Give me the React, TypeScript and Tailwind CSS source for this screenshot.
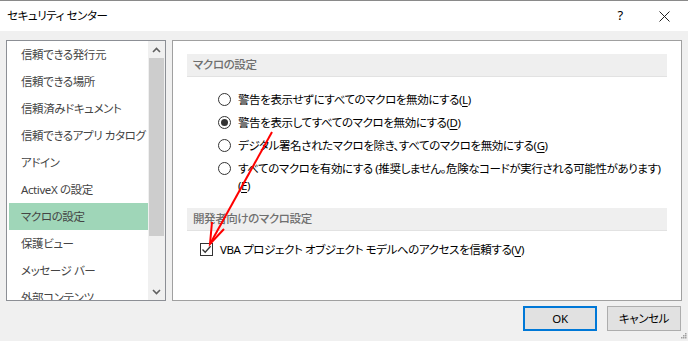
import React from "react";

const listItems = [
  "信頼できる発行元",
  "信頼できる場所",
  "信頼済みドキュメント",
  "信頼できるアプリ カタログ",
  "アドイン",
  "ActiveX の設定",
  "マクロの設定",
  "保護ビュー",
  "メッセージ バー",
  "外部コンテンツ",
];

function Radio({ checked }: { checked?: boolean }) {
  return (
    <span className="flex h-[13px] w-[13px] shrink-0 items-center justify-center rounded-full border border-[#333] bg-white">
      {checked && <span className="h-[7px] w-[7px] rounded-full bg-[#333]" />}
    </span>
  );
}

function Key({ k }: { k: string }) {
  return (
    <>
      (<span className="underline underline-offset-2">{k}</span>)
    </>
  );
}

function Chevron({ up }: { up?: boolean }) {
  return (
    <svg width="9" height="6" viewBox="0 0 9 6">
      <path
        d={up ? "M1 5 L4.5 1.5 L8 5" : "M1 1 L4.5 4.5 L8 1"}
        fill="none"
        stroke="#606060"
        strokeWidth="1.6"
      />
    </svg>
  );
}

export default function App() {
  return (
    <div className="relative flex h-[341px] w-[688px] flex-col overflow-hidden whitespace-nowrap border-t border-[#8a8a8a] bg-[#f0f0f0] font-['Noto_Sans','Noto_Sans_CJK_JP',sans-serif] text-[11.5px] tracking-[-0.4px] text-[#1a1a1a] [font-feature-settings:'palt']">
      {/* title bar */}
      <div className="flex h-[30px] shrink-0 items-center bg-white pl-[7px] pr-[18px]">
        <span className="text-[11.5px] text-black">セキュリティ センター</span>
        <span className="ml-auto w-[10px] text-center text-[13px] text-black">?</span>
        <svg className="ml-[34px]" width="11" height="11" viewBox="0 0 11 11">
          <path d="M0.5 0.5 L10.5 10.5 M10.5 0.5 L0.5 10.5" stroke="#222" strokeWidth="1" />
        </svg>
      </div>

      {/* content */}
      <div className="flex gap-[6px] pl-[6px] pt-[9px]">
        {/* category list */}
        <div className="flex h-[261px] w-[160px] border border-[#8c8f95] bg-white">
          <div className="flex-1 overflow-hidden pl-[2px]">
            {listItems.map((t) => (
              <div
                key={t}
                className={`flex h-[27px] items-center pl-[12px] text-[#444] ${
                  t === "マクロの設定" ? "bg-[#9fd6b8]" : ""
                }`}
              >
                {t}
              </div>
            ))}
          </div>
          <div className="flex w-[17px] flex-col bg-[#f0f0f0]">
            <div className="flex h-[17px] items-center justify-center">
              <Chevron up />
            </div>
            <div className="mx-[1px] h-[178px] bg-[#cdcdcd]" />
            <div className="flex-1" />
            <div className="flex h-[17px] items-center justify-center">
              <Chevron />
            </div>
          </div>
        </div>

        {/* settings panel */}
        <div className="h-[261px] w-[510px] border border-[#a0a0a0] bg-white">
          <div className="ml-[14px] mr-[14px] mt-[13px] flex h-[23px] items-center border-b border-[#e2e2e2] bg-[#efefef] pl-[6px] font-medium text-[#707070]">
            マクロの設定
          </div>
          <div className="mt-[11px] pl-[45px] text-black">
            <div className="flex h-[23px] items-center gap-[7px]">
              <Radio />
              <span>
                警告を表示せずにすべてのマクロを無効にする<Key k="L" />
              </span>
            </div>
            <div className="flex h-[23px] items-center gap-[7px]">
              <Radio checked />
              <span>
                警告を表示してすべてのマクロを無効にする<Key k="D" />
              </span>
            </div>
            <div className="flex h-[23px] items-center gap-[7px]">
              <Radio />
              <span>
                デジタル署名されたマクロを除き、すべてのマクロを無効にする<Key k="G" />
              </span>
            </div>
            <div className="flex items-start gap-[7px] py-[3px] leading-[17px]">
              <span className="mt-[2px]">
                <Radio />
              </span>
              <span>
                すべてのマクロを有効にする (推奨しません。危険なコードが実行される可能性があります)
                <br />
                <Key k="E" />
              </span>
            </div>
          </div>
          <div className="ml-[14px] mr-[14px] mt-[11px] flex h-[23px] items-center border-b border-[#e2e2e2] bg-[#efefef] pl-[6px] font-medium text-[#707070]">
            開発者向けのマクロ設定
          </div>
          <div className="mt-[7px] flex h-[23px] items-center gap-[7px] pl-[27px] text-black">
            <span className="flex h-[13px] w-[13px] items-center justify-center border border-[#333] bg-white">
              <svg width="11" height="11" viewBox="0 0 11 11">
                <path d="M1.5 5.5 L4.2 8.3 L9.6 2.2" fill="none" stroke="#333" strokeWidth="1.3" />
              </svg>
            </span>
            <span>
              VBA プロジェクト オブジェクト モデルへのアクセスを信頼する<Key k="V" />
            </span>
          </div>
        </div>
      </div>

      {/* buttons */}
      <div className="mt-[5px] flex justify-end gap-[10px] pr-[7px]">
        <button className="h-[25px] w-[74px] border-2 border-[#0078d7] bg-[#e1e1e1] text-black">
          OK
        </button>
        <button className="h-[25px] w-[74px] border border-[#adadad] bg-[#e1e1e1] text-black">
          キャンセル
        </button>
      </div>

      {/* resize grip */}
      <svg className="absolute bottom-[1px] right-[1px]" width="8" height="8" viewBox="0 0 8 8">
        {[
          [6, 1],
          [4, 3],
          [6, 3],
          [2, 5],
          [4, 5],
          [6, 5],
        ].map(([x, y]) => (
          <rect key={`${x}-${y}`} x={x} y={y} width="1.5" height="1.5" fill="#a0a0a0" />
        ))}
      </svg>

      {/* red annotation arrow */}
      <svg className="pointer-events-none absolute left-0 top-0" width="688" height="341">
        <line x1="272" y1="131" x2="210" y2="243" stroke="#ff0000" strokeWidth="2" />
        <polyline
          points="212,221 210,243 224,228"
          fill="none"
          stroke="#ff0000"
          strokeWidth="2"
          strokeLinejoin="miter"
        />
      </svg>
    </div>
  );
}
